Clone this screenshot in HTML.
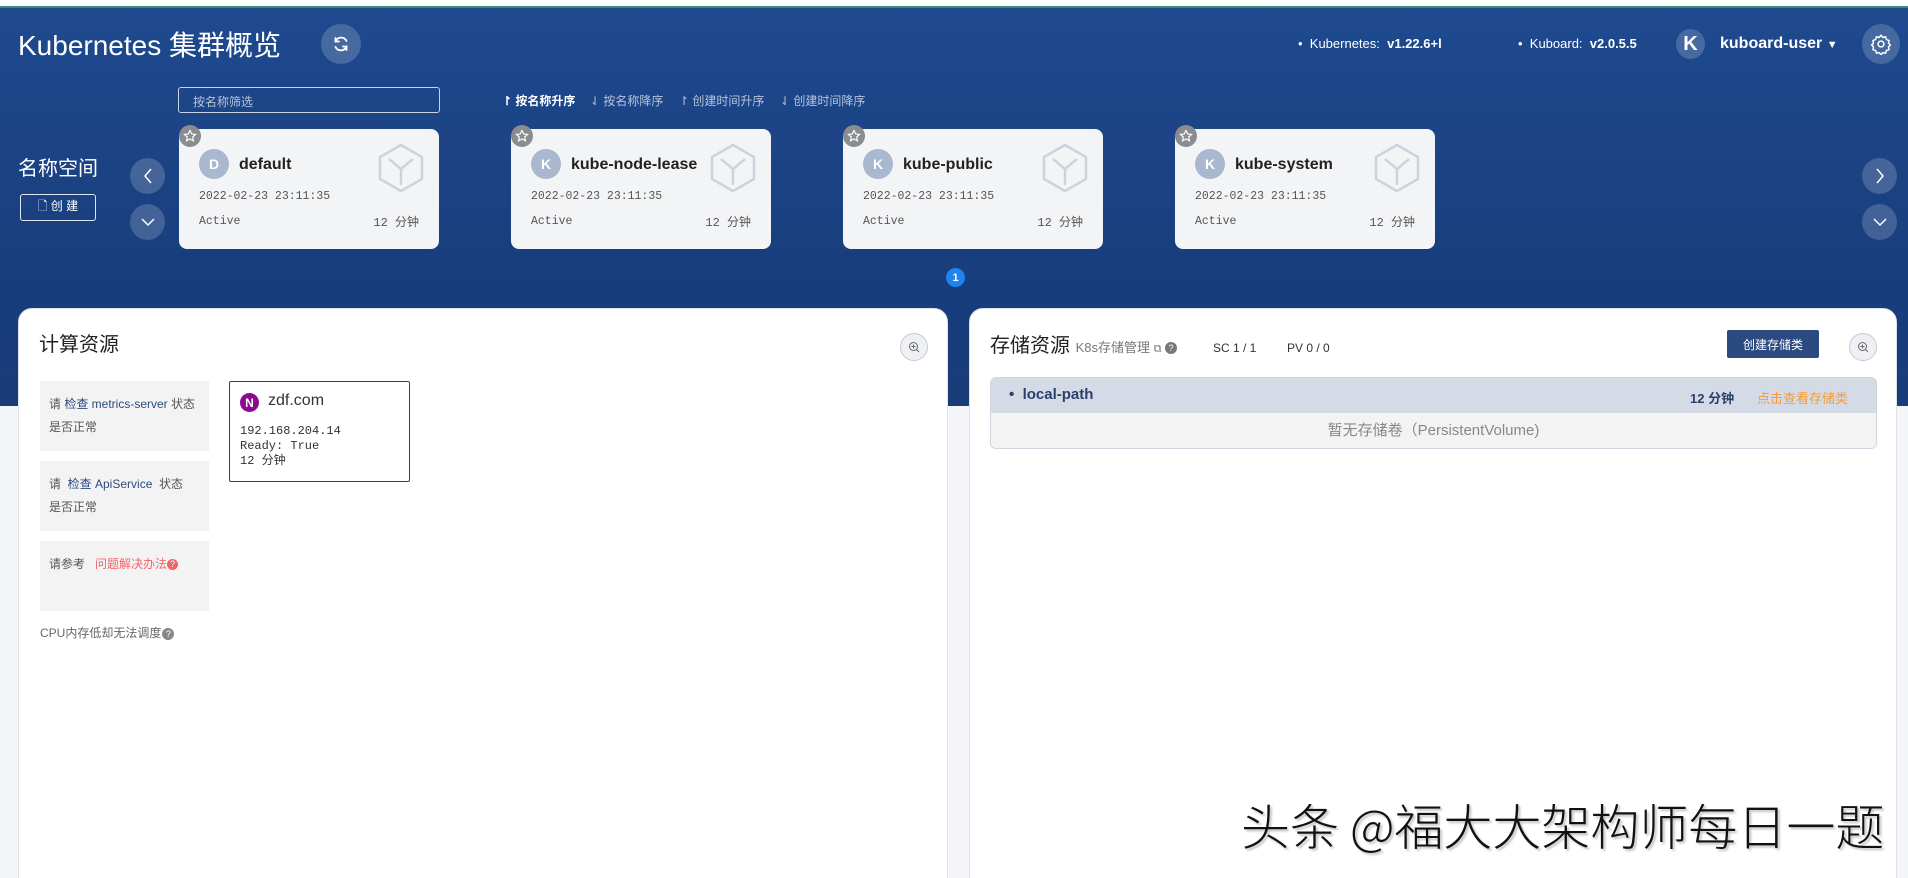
<!DOCTYPE html>
<html style="width:1908px;height:878px;overflow:hidden"><head><meta charset="utf-8"><style>
*{box-sizing:border-box;margin:0;padding:0}
body{width:1908px;height:878px;overflow:hidden;background:#f4f5f8;font-family:"Liberation Sans","Noto Sans CJK SC",sans-serif;position:relative;color:#333}
.abs{position:absolute}
#top{left:0;top:0;width:1908px;height:6px;background:#fff}
#green{left:0;top:6px;width:1908px;height:2px;background:#3d8a6e}
#hdr{left:0;top:8px;width:1908px;height:398px;background:linear-gradient(#1f4a8f,#183d7c 70%,#1a3d7a)}
.w{color:#fff}
.circ{border-radius:50%;background:rgba(255,255,255,.18);display:flex;align-items:center;justify-content:center}
.card{width:260px;height:120px;background:#f3f4f6;border-radius:8px;top:129px}
.star{width:22px;height:22px;border-radius:50%;background:#8a8c90;top:-4px;left:0;display:flex;align-items:center;justify-content:center}
.av{left:20px;top:20px;width:30px;height:30px;border-radius:50%;background:#a9b7cf;color:#fff;font-weight:bold;font-size:14px;display:flex;align-items:center;justify-content:center}
.nm{left:60px;top:27px;font-weight:bold;font-size:16px;color:#222}
.mono{font-family:"Liberation Mono","Noto Sans CJK SC",monospace}
.dt{left:20px;top:61px;font-size:11.5px;color:#555}
.st{left:20px;top:86px;font-size:11.5px;color:#555}
.mi{right:20px;top:84px;font-size:12px;color:#555}
.cube{right:14px;top:14px}
.sort{top:92px;font-size:12px;color:#b7c3da}
.panel{top:308px;height:600px;background:#fff;border-radius:14px;border:1px solid #dde1e8}
.info{left:21px;width:169px;height:70px;background:#f3f3f3;font-size:12px;color:#555;padding:12px 9px;line-height:23px}
.zm{width:28px;height:28px;border-radius:50%;border:1px solid #c5cbd6;background:#eef0f4;display:flex;align-items:center;justify-content:center}
</style></head><body>
<div id="top" class="abs"></div><div id="green" class="abs"></div>
<div id="hdr" class="abs"></div>

<div class="abs w" style="left:18px;top:29px;font-size:28px;line-height:34px">Kubernetes 集群概览</div>
<div class="abs circ" style="left:321px;top:24px;width:40px;height:40px">
<svg width="20" height="20" viewBox="0 0 20 20" fill="none" stroke="#fff" stroke-width="1.8" stroke-linecap="round"><path d="M15.5 7A6 6 0 0 0 4.5 7.5"/><path d="M4.5 4v3.5H8"/><path d="M4.5 13a6 6 0 0 0 11-.5"/><path d="M15.5 16v-3.5H12"/></svg></div>

<div class="abs w" style="left:1298px;top:36px;font-size:13px">•&nbsp; Kubernetes:&nbsp; <b>v1.22.6+l</b></div>
<div class="abs w" style="left:1518px;top:36px;font-size:13px">•&nbsp; Kuboard:&nbsp; <b>v2.0.5.5</b></div>
<div class="abs circ" style="left:1676px;top:29px;width:29px;height:30px;font-size:20px;font-weight:bold;color:#fff">K</div>
<div class="abs w" style="left:1720px;top:35px;font-size:16px;font-weight:bold">kuboard-user <span style="font-size:11px">▼</span></div>
<div class="abs circ" style="left:1862px;top:24px;width:38px;height:40px">
<svg width="22" height="22" viewBox="0 0 24 24" fill="none" stroke="#fff" stroke-width="1.6"><circle cx="12" cy="12" r="3.2"/><path d="M12 2.5l2 2.3 3-.6.9 2.9 2.9 1-.6 3 2 2-2 2 .6 3-2.9 1-.9 2.9-3-.6-2 2.3-2-2.3-3 .6-.9-2.9-2.9-1 .6-3-2-2 2-2-.6-3 2.9-1 .9-2.9 3 .6z"/></svg></div>

<div class="abs" style="left:178px;top:87px;width:262px;height:26px;border:1px solid #c9d3e6;border-radius:3px;font-size:12px;color:#b8c4da;padding:5px 14px">按名称筛选</div>
<div class="abs sort" style="left:502px;color:#fff;font-weight:bold">↾ 按名称升序</div>
<div class="abs sort" style="left:590px">⇃ 按名称降序</div>
<div class="abs sort" style="left:679px">↾ 创建时间升序</div>
<div class="abs sort" style="left:780px">⇃ 创建时间降序</div>

<div class="abs w" style="left:18px;top:152px;font-size:20px">名称空间</div>
<div class="abs w" style="left:20px;top:194px;width:76px;height:27px;border:1px solid #dfe6f2;border-radius:3px;font-size:12px;display:flex;align-items:center;justify-content:center">🗋 创 建</div>
<div class="abs circ" style="left:130px;top:158px;width:35px;height:36px"><svg width="14" height="18" viewBox="0 0 14 18" fill="none" stroke="#fff" stroke-width="1.5"><path d="M10 2L4 9l6 7"/></svg></div>
<div class="abs circ" style="left:130px;top:204px;width:35px;height:36px"><svg width="16" height="12" viewBox="0 0 16 12" fill="none" stroke="#fff" stroke-width="1.5"><path d="M2 3l6 6 6-6"/></svg></div>
<div class="abs circ" style="left:1862px;top:158px;width:35px;height:36px"><svg width="14" height="18" viewBox="0 0 14 18" fill="none" stroke="#fff" stroke-width="1.5"><path d="M4 2l6 7-6 7"/></svg></div>
<div class="abs circ" style="left:1862px;top:204px;width:35px;height:36px"><svg width="16" height="12" viewBox="0 0 16 12" fill="none" stroke="#fff" stroke-width="1.5"><path d="M2 3l6 6 6-6"/></svg></div>

<div class="abs card" style="left:179px"><div class="abs star"><svg width="14" height="14" viewBox="0 0 24 24" fill="none" stroke="#fff" stroke-width="2"><path d="M12 2.5l2.9 6 6.6.8-4.9 4.5 1.3 6.5L12 17l-5.9 3.3 1.3-6.5L2.5 9.3l6.6-.8z"/></svg></div><div class="abs av">D</div><div class="abs nm">default</div><svg class="abs cube" width="48" height="50" viewBox="0 0 48 50" fill="none" stroke="#cdd3de" stroke-width="2.5"><path d="M24 2L45 14v22L24 48 3 36V14z"/><path d="M12 16l12 10 12-10M24 26v16"/></svg><div class="abs dt mono">2022-02-23 23:11:35</div><div class="abs st mono">Active</div><div class="abs mi mono">12 分钟</div></div>
<div class="abs card" style="left:511px"><div class="abs star"><svg width="14" height="14" viewBox="0 0 24 24" fill="none" stroke="#fff" stroke-width="2"><path d="M12 2.5l2.9 6 6.6.8-4.9 4.5 1.3 6.5L12 17l-5.9 3.3 1.3-6.5L2.5 9.3l6.6-.8z"/></svg></div><div class="abs av">K</div><div class="abs nm">kube-node-lease</div><svg class="abs cube" width="48" height="50" viewBox="0 0 48 50" fill="none" stroke="#cdd3de" stroke-width="2.5"><path d="M24 2L45 14v22L24 48 3 36V14z"/><path d="M12 16l12 10 12-10M24 26v16"/></svg><div class="abs dt mono">2022-02-23 23:11:35</div><div class="abs st mono">Active</div><div class="abs mi mono">12 分钟</div></div>
<div class="abs card" style="left:843px"><div class="abs star"><svg width="14" height="14" viewBox="0 0 24 24" fill="none" stroke="#fff" stroke-width="2"><path d="M12 2.5l2.9 6 6.6.8-4.9 4.5 1.3 6.5L12 17l-5.9 3.3 1.3-6.5L2.5 9.3l6.6-.8z"/></svg></div><div class="abs av">K</div><div class="abs nm">kube-public</div><svg class="abs cube" width="48" height="50" viewBox="0 0 48 50" fill="none" stroke="#cdd3de" stroke-width="2.5"><path d="M24 2L45 14v22L24 48 3 36V14z"/><path d="M12 16l12 10 12-10M24 26v16"/></svg><div class="abs dt mono">2022-02-23 23:11:35</div><div class="abs st mono">Active</div><div class="abs mi mono">12 分钟</div></div>
<div class="abs card" style="left:1175px"><div class="abs star"><svg width="14" height="14" viewBox="0 0 24 24" fill="none" stroke="#fff" stroke-width="2"><path d="M12 2.5l2.9 6 6.6.8-4.9 4.5 1.3 6.5L12 17l-5.9 3.3 1.3-6.5L2.5 9.3l6.6-.8z"/></svg></div><div class="abs av">K</div><div class="abs nm">kube-system</div><svg class="abs cube" width="48" height="50" viewBox="0 0 48 50" fill="none" stroke="#cdd3de" stroke-width="2.5"><path d="M24 2L45 14v22L24 48 3 36V14z"/><path d="M12 16l12 10 12-10M24 26v16"/></svg><div class="abs dt mono">2022-02-23 23:11:35</div><div class="abs st mono">Active</div><div class="abs mi mono">12 分钟</div></div>

<div class="abs" style="left:946px;top:268px;width:19px;height:19px;border-radius:50%;background:#1d84f0;color:#fff;font-size:11px;font-weight:bold;display:flex;align-items:center;justify-content:center">1</div>

<div class="abs panel" style="left:18px;width:930px">
 <div class="abs" style="left:20px;top:19px;font-size:20px;color:#222">计算资源</div>
 <div class="abs zm" style="left:881px;top:24px"><svg width="12" height="12" viewBox="0 0 12 12" fill="none" stroke="#666" stroke-width="1"><circle cx="5.5" cy="5.5" r="4"/><path d="M8.5 8.5l2.5 2.5M5.5 3.5v4M3.5 5.5h4"/></svg></div>
 <div class="abs info" style="top:72px">请 <span style="color:#2c4a7f">检查 metrics-server</span> 状态<br>是否正常</div>
 <div class="abs info" style="top:152px">请&nbsp; <span style="color:#2c4a7f">检查 ApiService</span>&nbsp; 状态<br>是否正常</div>
 <div class="abs info" style="top:232px">请参考&nbsp;&nbsp; <span style="color:#f0656a">问题解决办法<span style="display:inline-block;width:11px;height:11px;border-radius:50%;background:#f0656a;color:#fff;font-size:9px;line-height:11px;text-align:center;vertical-align:1px">?</span></span></div>
 <div class="abs" style="left:21px;top:315px;font-size:12px;color:#666">CPU内存低却无法调度<span style="display:inline-block;width:12px;height:12px;border-radius:50%;background:#888;color:#fff;font-size:9px;line-height:12px;text-align:center;margin-left:1px">?</span></div>
 <div class="abs" style="left:210px;top:72px;width:181px;height:101px;border:1px solid #2c3e6b;border-radius:2px">
  <div class="abs" style="left:10px;top:11px;width:19px;height:19px;border-radius:50%;background:#8d0a8f;color:#fff;font-weight:bold;font-size:12px;display:flex;align-items:center;justify-content:center">N</div>
  <div class="abs" style="left:38px;top:10px;font-size:16px;color:#333">zdf.com</div>
  <div class="abs mono" style="left:10px;top:42px;font-size:12px;line-height:15px;color:#333">192.168.204.14<br>Ready: True<br>12 分钟</div>
 </div>
</div>

<div class="abs panel" style="left:969px;width:928px">
 <div class="abs" style="left:20px;top:20px;font-size:20px;color:#222">存储资源 <span style="font-size:13px;color:#777">K8s存储管理 <span style="font-size:11px">⧉</span> <span style="display:inline-block;width:12px;height:12px;border-radius:50%;background:#777;color:#fff;font-size:9px;line-height:12px;text-align:center;vertical-align:1px">?</span></span></div>
 <div class="abs" style="left:243px;top:32px;font-size:12px;color:#333">SC 1 / 1</div>
 <div class="abs" style="left:317px;top:32px;font-size:12px;color:#333">PV 0 / 0</div>
 <div class="abs" style="left:757px;top:21px;width:92px;height:28px;background:#2b4a7f;border-radius:2px;color:#fff;font-size:12px;display:flex;align-items:center;justify-content:center">创建存储类</div>
 <div class="abs zm" style="left:879px;top:24px"><svg width="12" height="12" viewBox="0 0 12 12" fill="none" stroke="#666" stroke-width="1"><circle cx="5.5" cy="5.5" r="4"/><path d="M8.5 8.5l2.5 2.5M5.5 3.5v4M3.5 5.5h4"/></svg></div>
 <div class="abs" style="left:20px;top:68px;width:887px;height:72px;border:1px solid #cfd5df;border-radius:6px;overflow:hidden">
  <div style="height:35px;background:#d5dbe6;position:relative">
   <div class="abs" style="left:18px;top:8px;font-size:15px;font-weight:bold;color:#2c3e6b">•&nbsp; local-path</div>
   <div class="abs" style="left:699px;top:10px;font-size:13px;font-weight:bold;color:#2c3e6b">12 分钟</div>
   <div class="abs" style="left:766px;top:10px;font-size:13px;color:#f39c3a">点击查看存储类</div>
  </div>
  <div style="height:36px;background:#f3f3f3;text-align:center;font-size:15px;color:#888;line-height:36px">暂无存储卷（PersistentVolume)</div>
 </div>
</div>

<div class="abs" style="left:1241px;top:796px;font-size:49px;line-height:58px;color:#111;font-family:'Noto Sans CJK SC','Liberation Sans',sans-serif;font-weight:300;white-space:nowrap;text-shadow:2px 2px 2px rgba(0,0,0,.25)">头条 @福大大架构师每日一题</div>
</body></html>
